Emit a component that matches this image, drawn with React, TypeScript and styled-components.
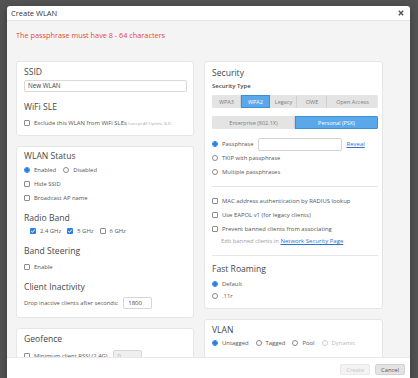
import React from "react";
import styled, { createGlobalStyle } from "styled-components";

const GlobalStyle = createGlobalStyle`
  html, body {
    margin: 0;
    padding: 0;
  }
  body {
    width: 418px;
    height: 378px;
    overflow: hidden;
    background: #525252;
    font-family: "Open Sans", "Liberation Sans", sans-serif;
  }
  * {
    box-sizing: border-box;
  }
`;

const Check: React.FC<{ checked?: boolean }> = ({ checked }) => (
  <CheckBox $checked={checked}>
    {checked && (
      <svg width="6" height="6" viewBox="0 0 6 6">
        <path d="M1.2 3.1 L2.5 4.3 L4.8 1.6" stroke="#fff" strokeWidth="1" fill="none" />
      </svg>
    )}
  </CheckBox>
);

const Radio: React.FC<{ checked?: boolean; disabled?: boolean }> = ({ checked, disabled }) => (
  <RadioDot $checked={checked} $disabled={disabled} />
);

const App: React.FC = () => {
  return (
    <>
      <GlobalStyle />
      <Backdrop>
        <Modal>
          <Header>
            <Title>Create WLAN</Title>
            <svg width="6" height="6" viewBox="0 0 6 6">
              <path d="M0.8 0.8 L5.2 5.2 M5.2 0.8 L0.8 5.2" stroke="#555" strokeWidth="1.4" />
            </svg>
          </Header>

          <Body>
            <ErrorText>The passphrase must have 8 - 64 characters</ErrorText>

            <Columns>
              <Column $w={178}>
                {/* SSID */}
                <Card $pt={4} $pb={5}>
                  <Heading>SSID</Heading>
                  <TextInput $mt={2}>New WLAN</TextInput>
                  <Heading $mt={9}>WiFi SLE</Heading>
                  <Row $mt={3}>
                    <Check />
                    <Label>
                      Exclude this WLAN from WiFi SLEs <Hint>(except AP Uptime SLE)</Hint>
                    </Label>
                  </Row>
                </Card>

                {/* status / radio */}
                <Card $pt={3} $pb={7}>
                  <Heading>WLAN Status</Heading>
                  <Row $mt={1}>
                    <Radio checked />
                    <Label>Enabled</Label>
                    <Radio />
                    <Label>Disabled</Label>
                  </Row>
                  <Row>
                    <Check />
                    <Label>Hide SSID</Label>
                  </Row>
                  <Row>
                    <Check />
                    <Label>Broadcast AP name</Label>
                  </Row>
                  <Heading $mt={7}>Radio Band</Heading>
                  <Row $indent={6}>
                    <Check checked />
                    <Label $gap={6}>2.4 GHz</Label>
                    <Check checked />
                    <Label $gap={6}>5 GHz</Label>
                    <Check />
                    <Label>6 GHz</Label>
                  </Row>
                  <Heading $mt={7}>Band Steering</Heading>
                  <Row $mt={3}>
                    <Check />
                    <Label>Enable</Label>
                  </Row>
                  <Heading $mt={7}>Client Inactivity</Heading>
                  <Row $mt={3}>
                    <Label $first $small>Drop inactive clients after seconds:</Label>
                    <SmallInput>1800</SmallInput>
                  </Row>
                </Card>

                <Card $pt={4} $pb={8}>
                  <Heading>Geofence</Heading>
                  <Row $mt={4}>
                    <Check />
                    <Label>Minimum client RSSI (2.4G)</Label>
                    <SmallInput $disabled>0</SmallInput>
                  </Row>
                </Card>
              </Column>

              <Column $w={179}>
                <Card $pt={5} $pb={6} $pr={4}>
                  <Heading>Security</Heading>
                  <SubLabel $mt={2}>Security Type</SubLabel>
                  <Segments $mt={4}>
                    <Segment $w={29}>WPA3</Segment>
                    <Segment $w={29} $active>WPA2</Segment>
                    <Segment $w={27}>Legacy</Segment>
                    <Segment $w={30}>OWE</Segment>
                    <Segment $w={51} $last>Open Access</Segment>
                  </Segments>
                  <Segments $mt={8}>
                    <Segment $w={83}>Enterprise (802.1X)</Segment>
                    <Segment $w={83} $active $last>Personal (PSK)</Segment>
                  </Segments>
                  <Row $mt={8}>
                    <Radio checked />
                    <Label>Passphrase</Label>
                    <PassInput />
                    <Link>Reveal</Link>
                  </Row>
                  <Row>
                    <Radio />
                    <Label>TKIP with passphrase</Label>
                  </Row>
                  <Row>
                    <Radio />
                    <Label>Multiple passphrases</Label>
                  </Row>
                  <Divider $mt={7} />
                  <Row $mt={7}>
                    <Check />
                    <Label>MAC address authentication by RADIUS lookup</Label>
                  </Row>
                  <Row>
                    <Check />
                    <Label>Use EAPOL v1 (for legacy clients)</Label>
                  </Row>
                  <Row>
                    <Check />
                    <Label>Prevent banned clients from associating</Label>
                  </Row>
                  <Note>
                    Edit banned clients in <Link>Network Security Page</Link>
                  </Note>
                  <Divider $mt={9} />
                  <Heading $mt={7}>Fast Roaming</Heading>
                  <Row $mt={3} $h={12}>
                    <Radio checked />
                    <Label>Default</Label>
                  </Row>
                  <Row $h={12}>
                    <Radio />
                    <Label>.11r</Label>
                  </Row>
                </Card>

                <Card $pt={4} $pb={8} $pr={4}>
                  <Heading>VLAN</Heading>
                  <Row>
                    <Radio checked />
                    <Label>Untagged</Label>
                    <Radio />
                    <Label>Tagged</Label>
                    <Radio />
                    <Label>Pool</Label>
                    <Radio disabled />
                    <Label $muted>Dynamic</Label>
                  </Row>
                </Card>
              </Column>
            </Columns>
          </Body>

          <Footer>
            <Button $disabled>Create</Button>
            <Button>Cancel</Button>
          </Footer>
        </Modal>
      </Backdrop>
    </>
  );
};

export default App;

// ---------- styled-components ----------

const Backdrop = styled.div`
  width: 418px;
  height: 378px;
  padding: 6px 0 0 7px;
  overflow: hidden;
  background: #535353;
`;

const Modal = styled.div`
  width: 403px;
  height: 376px;
  background: #ffffff;
  border-radius: 3px 3px 0 0;
  display: flex;
  flex-direction: column;
  overflow: hidden;
  box-shadow: 0 2px 8px rgba(0, 0, 0, 0.3);
`;

const Header = styled.div`
  height: 15px;
  flex: none;
  display: flex;
  align-items: center;
  justify-content: space-between;
  padding: 0 6px 1px 4px;
  border-bottom: 1px solid #e3e3e3;
`;

const Title = styled.div`
  font-size: 7.5px;
  color: #333333;
`;

const Body = styled.div`
  height: 336px;
  flex: none;
  overflow: hidden;
  background: #f4f4f4;
  padding: 9px 0 0 9px;
`;

const ErrorText = styled.div`
  font-size: 7.3px;
  line-height: 10px;
  color: #e2483a;
  margin-bottom: 21px;
`;

const Columns = styled.div`
  display: flex;
  gap: 10px;
  align-items: flex-start;
`;

const Column = styled.div<{ $w: number }>`
  width: ${({ $w }) => $w}px;
  display: flex;
  flex-direction: column;
  gap: 10px;
`;

const Card = styled.div<{ $pt: number; $pb: number; $pr?: number }>`
  background: #ffffff;
  border: 1px solid #e6e6e6;
  border-radius: 3px;
  padding: ${({ $pt, $pb, $pr = 6 }) => `${$pt}px ${$pr}px ${$pb}px 7px`};
  display: flex;
  flex-direction: column;
`;

const Heading = styled.div<{ $mt?: number }>`
  font-size: 8.6px;
  line-height: 12px;
  color: #484848;
  margin-top: ${({ $mt = 0 }) => $mt}px;
`;

const SubLabel = styled.div<{ $mt?: number }>`
  font-size: 6px;
  line-height: 10px;
  color: #4a4a4a;
  font-weight: 600;
  margin-top: ${({ $mt = 0 }) => $mt}px;
`;

const TextInput = styled.div<{ $mt?: number }>`
  height: 12px;
  margin-top: ${({ $mt = 0 }) => $mt}px;
  border: 1px solid #d9d9d9;
  border-radius: 2px;
  padding-left: 3px;
  font-size: 6.3px;
  line-height: 10px;
  color: #444444;
`;

const Row = styled.div<{ $mt?: number; $h?: number; $indent?: number }>`
  height: ${({ $h = 14 }) => $h}px;
  margin-top: ${({ $mt = 0 }) => $mt}px;
  padding-left: ${({ $indent = 0 }) => $indent}px;
  display: flex;
  align-items: center;
  white-space: nowrap;
`;

const CheckBox = styled.span<{ $checked?: boolean }>`
  width: 6px;
  height: 6px;
  flex: none;
  display: inline-flex;
  border-radius: 1px;
  border: ${({ $checked }) => ($checked ? "none" : "1px solid #8c8c8c")};
  background: ${({ $checked }) => ($checked ? "#2a80e4" : "#ffffff")};
`;

const RadioDot = styled.span<{ $checked?: boolean; $disabled?: boolean }>`
  width: 6px;
  height: 6px;
  flex: none;
  border-radius: 50%;
  border: 1px solid
    ${({ $checked, $disabled }) => ($checked ? "#2a80e4" : $disabled ? "#d0d0d0" : "#8c8c8c")};
  background: ${({ $checked }) =>
    $checked ? "radial-gradient(circle, #2a80e4 0 1.6px, #cfe3fa 1.8px)" : "#ffffff"};
`;

const Label = styled.span<{ $muted?: boolean; $first?: boolean; $small?: boolean; $gap?: number }>`
  font-size: ${({ $small }) => ($small ? 5.8 : 5.9)}px;
  color: ${({ $muted }) => ($muted ? "#b8b8b8" : "#555555")};
  margin: 0 ${({ $gap = 7 }) => $gap}px 0 ${({ $first }) => ($first ? 0 : 4)}px;
`;

const Hint = styled.span`
  font-size: 4px;
  color: #a6a6a6;
`;

const SmallInput = styled.div<{ $disabled?: boolean }>`
  width: 29px;
  height: 12px;
  flex: none;
  margin-left: -2px;
  border: 1px solid #d6d6d6;
  border-radius: 2px;
  padding-left: 4px;
  font-size: 6px;
  line-height: 10px;
  color: ${({ $disabled }) => ($disabled ? "#b0b0b0" : "#444444")};
  background: ${({ $disabled }) => ($disabled ? "#efefef" : "#ffffff")};
`;

const PassInput = styled.div`
  width: 84px;
  height: 13px;
  flex: none;
  margin-left: -2px;
  border: 1px solid #d4d4d4;
  border-radius: 2px;
`;

const Link = styled.span`
  font-size: 6px;
  color: #2f72c8;
  text-decoration: underline;
  margin-left: 4px;
`;

const Note = styled.div`
  height: 10px;
  padding-left: 9px;
  font-size: 5.8px;
  line-height: 10px;
  color: #a0a0a0;
  white-space: nowrap;

  ${Link} {
    margin-left: 0;
  }
`;

const Divider = styled.div<{ $mt?: number }>`
  height: 1px;
  margin-top: ${({ $mt = 0 }) => $mt}px;
  background: #e6e6e6;
`;

const Segments = styled.div<{ $mt?: number }>`
  height: 13px;
  margin-top: ${({ $mt = 0 }) => $mt}px;
  display: flex;
  border-radius: 2px;
  overflow: hidden;
`;

const Segment = styled.div<{ $w: number; $active?: boolean; $last?: boolean }>`
  width: ${({ $w }) => $w}px;
  flex: none;
  display: flex;
  align-items: center;
  justify-content: center;
  font-size: 5.5px;
  color: ${({ $active }) => ($active ? "#ffffff" : "#7c7c7c")};
  background: ${({ $active }) => ($active ? "#5aa8ea" : "#e4e4e4")};
  border: 1px solid ${({ $active }) => ($active ? "#3f8fd6" : "#e4e4e4")};
  border-right: 1px solid
    ${({ $active, $last }) => ($active ? "#3f8fd6" : $last ? "#e4e4e4" : "#d0d0d0")};
`;

const Footer = styled.div`
  height: 25px;
  flex: none;
  display: flex;
  justify-content: flex-end;
  align-items: flex-start;
  gap: 5px;
  padding: 6px 5px 0 0;
  border-top: 1px solid #e8e8e8;
  background: #ffffff;
`;

const Button = styled.div<{ $disabled?: boolean }>`
  height: 11px;
  padding: 0 5px;
  display: flex;
  align-items: center;
  border-radius: 2px;
  font-size: 5.8px;
  color: ${({ $disabled }) => ($disabled ? "#c6c6c6" : "#555555")};
  background: ${({ $disabled }) => ($disabled ? "#f3f3f3" : "#e3e3e3")};
  border: 1px solid ${({ $disabled }) => ($disabled ? "#e8e8e8" : "#d3d3d3")};
`;
